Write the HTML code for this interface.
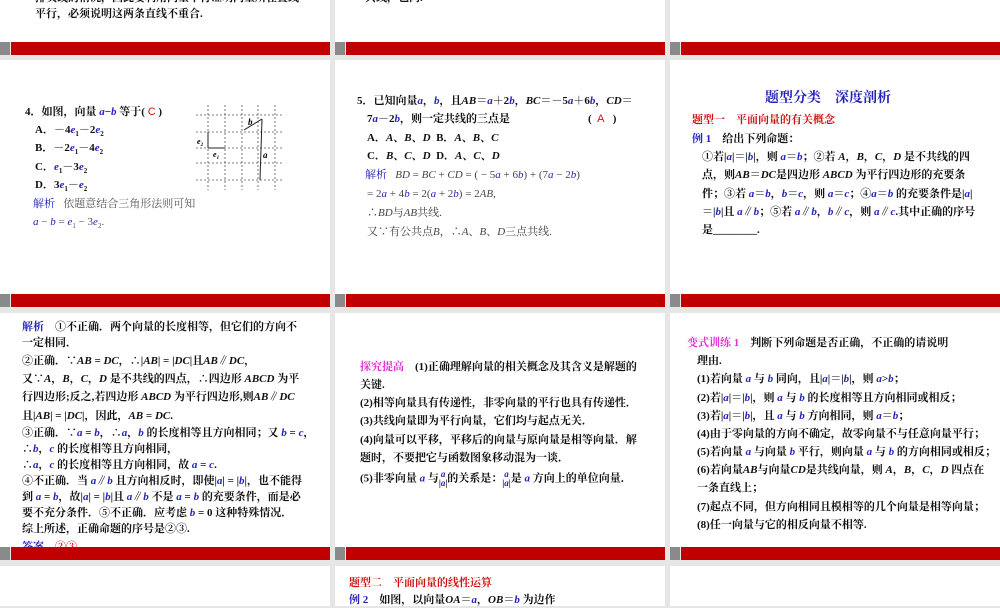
<!DOCTYPE html>
<html><head><meta charset="utf-8"><style>
body{margin:0;width:1000px;height:600px;background:#e6e6e6;position:relative;overflow:hidden;font-family:"Liberation Serif","Noto Serif CJK SC",serif;font-size:11px;color:#111;font-weight:bold}
.s{position:absolute;background:#fff}
.bar{position:absolute;height:13px;background:#c00000}
.sq{position:absolute;height:13px;width:10px;background:#8a8a8a}
.t{position:absolute;white-space:nowrap;line-height:16px}
.n{font-weight:normal}
.b{color:#2424b8;font-style:italic}
.r{color:#d01010}
.m{color:#e030d0}
.bl{color:#2424b8}
</style></head><body>
<div class="s" style="left:0;top:0;width:330px;height:42px"></div>
<div class="s" style="left:335px;top:0;width:330px;height:42px"></div>
<div class="s" style="left:670px;top:0;width:330px;height:42px"></div>
<div class="s" style="left:0;top:60px;width:330px;height:234px"></div>
<div class="s" style="left:335px;top:60px;width:330px;height:234px"></div>
<div class="s" style="left:670px;top:60px;width:330px;height:234px"></div>
<div class="s" style="left:0;top:313px;width:330px;height:235px"></div>
<div class="s" style="left:335px;top:313px;width:330px;height:235px"></div>
<div class="s" style="left:670px;top:313px;width:330px;height:235px"></div>
<div class="s" style="left:0;top:566px;width:330px;height:40px"></div>
<div class="s" style="left:335px;top:566px;width:330px;height:40px"></div>
<div class="s" style="left:670px;top:566px;width:330px;height:40px"></div>
<div class="sq" style="left:0;top:42px"></div><div class="bar" style="left:11px;top:42px;width:319px"></div>
<div class="sq" style="left:335px;top:42px"></div><div class="bar" style="left:346px;top:42px;width:319px"></div>
<div class="sq" style="left:670px;top:42px"></div><div class="bar" style="left:681px;top:42px;width:319px"></div>
<div class="sq" style="left:0;top:294px"></div><div class="bar" style="left:11px;top:294px;width:319px"></div>
<div class="sq" style="left:335px;top:294px"></div><div class="bar" style="left:346px;top:294px;width:319px"></div>
<div class="sq" style="left:670px;top:294px"></div><div class="bar" style="left:681px;top:294px;width:319px"></div>

<!-- row1 -->
<div class="t" style="left:35px;top:-10px">排负或的情况，因此要利用向量平行证明向量所在直线</div>
<div class="t" style="left:35px;top:6px">平行，必须说明这两条直线不重合.</div>
<div class="t" style="left:365px;top:-10px">共线，也同.</div>

<!-- row2 col1 -->
<div class="t" style="left:25px;top:104px"><b>4</b>．如图，向量 <span class="b">a</span>−<span class="b">b</span> 等于( <span class="r n" style="font-family:'Liberation Sans'">C</span> )</div>
<div class="t" style="left:35px;top:122px">A．－4<span class="b">e</span><sub style="font-size:7px">1</sub>－2<span class="b">e</span><sub style="font-size:7px">2</sub></div>
<div class="t" style="left:35px;top:140px">B．－2<span class="b">e</span><sub style="font-size:7px">1</sub>－4<span class="b">e</span><sub style="font-size:7px">2</sub></div>
<div class="t" style="left:35px;top:159px">C．<span class="b">e</span><sub style="font-size:7px">1</sub>－3<span class="b">e</span><sub style="font-size:7px">2</sub></div>
<div class="t" style="left:35px;top:177px">D．3<span class="b">e</span><sub style="font-size:7px">1</sub>－<span class="b">e</span><sub style="font-size:7px">2</sub></div>
<div class="t n" style="left:33px;top:196px;color:#555"><span class="bl">解析</span>&nbsp;&nbsp; 依题意结合三角形法则可知</div>
<div class="t n" style="left:33px;top:214px;color:#555"><span class="b">a</span> − <span class="b">b</span> = <span class="b">e</span><sub style="font-size:7px">1</sub> − 3<span class="b">e</span><sub style="font-size:7px">2</sub>.</div>
<svg style="position:absolute;left:0;top:0" width="330" height="300">
<g stroke="#555" stroke-width="0.8" stroke-dasharray="2,2" fill="none">
<line x1="196" y1="115" x2="282" y2="115"/><line x1="196" y1="132" x2="282" y2="132"/><line x1="196" y1="148" x2="282" y2="148"/><line x1="196" y1="163" x2="282" y2="163"/><line x1="196" y1="180" x2="282" y2="180"/>
<line x1="208" y1="105" x2="208" y2="190"/><line x1="225" y1="105" x2="225" y2="190"/><line x1="242" y1="105" x2="242" y2="190"/><line x1="258" y1="105" x2="258" y2="190"/><line x1="275" y1="105" x2="275" y2="190"/>
</g>
<g stroke="#222" stroke-width="1" fill="none">
<line x1="208" y1="148" x2="208" y2="132"/><line x1="208" y1="148" x2="225" y2="148"/>
<line x1="262" y1="119" x2="244" y2="130"/><line x1="262" y1="119" x2="260" y2="180"/>
</g>
<text x="197" y="144" font-size="8" font-style="italic" font-family="Liberation Serif">e<tspan font-size="5" dy="2">2</tspan></text>
<text x="213" y="157" font-size="8" font-style="italic" font-family="Liberation Serif">e<tspan font-size="5" dy="2">1</tspan></text>
<text x="248" y="125" font-size="9" font-style="italic" font-family="Liberation Serif">b</text>
<text x="263" y="158" font-size="9" font-style="italic" font-family="Liberation Serif">a</text>
</svg>

<!-- row2 col2 -->
<div class="t" style="left:357px;top:93px">5．已知向量<span class="b">a</span>，<span class="b">b</span>，且<i>AB</i>＝<span class="b">a</span>＋2<span class="b">b</span>，<i>BC</i>＝－5<span class="b">a</span>＋6<span class="b">b</span>，<i>CD</i>＝</div>
<div class="t" style="left:367px;top:111px">7<span class="b">a</span>－2<span class="b">b</span>，则一定共线的三点是</div>
<div class="t" style="left:588px;top:111px">( &nbsp;<span class="r n" style="font-family:'Liberation Sans'">A</span> &nbsp;&nbsp;)</div>
<div class="t" style="left:367px;top:130px">A．<i>A</i>、<i>B</i>、<i>D</i> &nbsp;B．<i>A</i>、<i>B</i>、<i>C</i></div>
<div class="t" style="left:367px;top:148px">C．<i>B</i>、<i>C</i>、<i>D</i> &nbsp;D．<i>A</i>、<i>C</i>、<i>D</i></div>
<div class="t n" style="left:365px;top:167px;color:#444"><span class="bl">解析</span>&nbsp;&nbsp; <i>BD</i> = <i>BC</i> + <i>CD</i> = ( − 5<span class="b">a</span> + 6<span class="b">b</span>) + (7<span class="b">a</span> − 2<span class="b">b</span>)</div>
<div class="t n" style="left:367px;top:186px;color:#444">= 2<span class="b">a</span> + 4<span class="b">b</span> = 2(<span class="b">a</span> + 2<span class="b">b</span>) = 2<i>AB</i>,</div>
<div class="t n" style="left:367px;top:205px;color:#444">∴<i>BD</i>与<i>AB</i>共线.</div>
<div class="t n" style="left:367px;top:224px;color:#444">又∵有公共点<i>B</i>，∴<i>A</i>、<i>B</i>、<i>D</i>三点共线.</div>

<!-- row2 col3 -->
<div class="t" style="left:765px;top:91px;font-size:14px;color:#2424b8">题型分类　深度剖析</div>
<div class="t" style="left:692px;top:112px;color:#d01010">题型一　平面向量的有关概念</div>
<div class="t" style="left:692px;top:131px"><span class="bl">例 1</span>　给出下列命题：</div>
<div class="t" style="left:702px;top:149px">①若|<span class="b">a</span>|＝|<span class="b">b</span>|，则 <span class="b">a</span>＝<span class="b">b</span>；②若 <i>A</i>，<i>B</i>，<i>C</i>，<i>D</i> 是不共线的四</div>
<div class="t" style="left:702px;top:167px">点，则<i>AB</i>＝<i>DC</i>是四边形 <i>ABCD</i> 为平行四边形的充要条</div>
<div class="t" style="left:702px;top:186px">件；③若 <span class="b">a</span>＝<span class="b">b</span>，<span class="b">b</span>＝<span class="b">c</span>，则 <span class="b">a</span>＝<span class="b">c</span>；④<span class="b">a</span>＝<span class="b">b</span> 的充要条件是|<span class="b">a</span>|</div>
<div class="t" style="left:702px;top:204px">＝|<span class="b">b</span>|且 <span class="b">a</span>∥<span class="b">b</span>；⑤若 <span class="b">a</span>∥<span class="b">b</span>，<span class="b">b</span>∥<span class="b">c</span>，则 <span class="b">a</span>∥<span class="b">c</span>.其中正确的序号</div>
<div class="t" style="left:702px;top:222px">是________.</div>

<!-- row3 col1 -->
<div class="t" style="left:22px;top:319px"><span class="bl">解析</span>　①不正确．两个向量的长度相等，但它们的方向不</div>
<div class="t" style="left:22px;top:335px">一定相同．</div>
<div class="t" style="left:22px;top:353px">②正确．∵<i>AB</i> = <i>DC</i>，∴|<i>AB</i>| = |<i>DC</i>|且<i>AB</i>∥<i>DC</i>，</div>
<div class="t" style="left:22px;top:371px">又∵<i>A</i>，<i>B</i>，<i>C</i>，<i>D</i> 是不共线的四点，∴四边形 <i>ABCD</i> 为平</div>
<div class="t" style="left:22px;top:389px">行四边形;反之,若四边形 <i>ABCD</i> 为平行四边形,则<i>AB</i>∥<i>DC</i></div>
<div class="t" style="left:22px;top:408px">且|<i>AB</i>| = |<i>DC</i>|，因此，<i>AB</i> = <i>DC</i>.</div>
<div class="t" style="left:22px;top:425px">③正确．∵<span class="b">a</span> = <span class="b">b</span>，∴<span class="b">a</span>，<span class="b">b</span> 的长度相等且方向相同；又 <span class="b">b</span> = <span class="b">c</span>，</div>
<div class="t" style="left:22px;top:441px">∴<span class="b">b</span>，<span class="b">c</span> 的长度相等且方向相同，</div>
<div class="t" style="left:22px;top:457px">∴<span class="b">a</span>，<span class="b">c</span> 的长度相等且方向相同，故 <span class="b">a</span> = <span class="b">c</span>.</div>
<div class="t" style="left:22px;top:473px">④不正确．当 <span class="b">a</span>∥<span class="b">b</span> 且方向相反时，即使|<span class="b">a</span>| = |<span class="b">b</span>|，也不能得</div>
<div class="t" style="left:22px;top:489px">到 <span class="b">a</span> = <span class="b">b</span>，故|<span class="b">a</span>| = |<span class="b">b</span>|且 <span class="b">a</span>∥<span class="b">b</span> 不是 <span class="b">a</span> = <span class="b">b</span> 的充要条件，而是必</div>
<div class="t" style="left:22px;top:505px">要不充分条件．⑤不正确．应考虑 <span class="b">b</span> = 0 这种特殊情况．</div>
<div class="t" style="left:22px;top:521px">综上所述，正确命题的序号是②③.</div>
<div class="t" style="left:22px;top:539px"><span class="bl">答案</span>　<span class="r">②③</span></div>

<!-- row3 col2 -->
<div class="t" style="left:360px;top:359px"><span class="m">探究提高</span>　(1)正确理解向量的相关概念及其含义是解题的</div>
<div class="t" style="left:360px;top:377px">关键.</div>
<div class="t" style="left:360px;top:395px">(2)相等向量具有传递性，非零向量的平行也具有传递性．</div>
<div class="t" style="left:360px;top:413px">(3)共线向量即为平行向量，它们均与起点无关．</div>
<div class="t" style="left:360px;top:432px">(4)向量可以平移，平移后的向量与原向量是相等向量．解</div>
<div class="t" style="left:360px;top:450px">题时，不要把它与函数图象移动混为一谈．</div>
<div class="t" style="left:360px;top:470px">(5)非零向量 <span class="b">a</span> 与<span style="display:inline-block;vertical-align:middle;text-align:center;font-size:9px;line-height:9px"><span class="b">a</span><br>|<span class="b">a</span>|</span>的关系是：<span style="display:inline-block;vertical-align:middle;text-align:center;font-size:9px;line-height:9px"><span class="b">a</span><br>|<span class="b">a</span>|</span>是 <span class="b">a</span> 方向上的单位向量．</div>

<!-- row3 col3 -->
<div class="t" style="left:687px;top:335px"><span class="m">变式训练 1</span>　判断下列命题是否正确，不正确的请说明</div>
<div class="t" style="left:697px;top:353px">理由.</div>
<div class="t" style="left:697px;top:371px">(1)若向量 <span class="b">a</span> 与 <span class="b">b</span> 同向，且|<span class="b">a</span>|＝|<span class="b">b</span>|，则 <span class="b">a</span>&gt;<span class="b">b</span>；</div>
<div class="t" style="left:697px;top:390px">(2)若|<span class="b">a</span>|＝|<span class="b">b</span>|，则 <span class="b">a</span> 与 <span class="b">b</span> 的长度相等且方向相同或相反；</div>
<div class="t" style="left:697px;top:408px">(3)若|<span class="b">a</span>|＝|<span class="b">b</span>|，且 <span class="b">a</span> 与 <span class="b">b</span> 方向相同，则 <span class="b">a</span>＝<span class="b">b</span>；</div>
<div class="t" style="left:697px;top:426px">(4)由于零向量的方向不确定，故零向量不与任意向量平行；</div>
<div class="t" style="left:697px;top:444px">(5)若向量 <span class="b">a</span> 与向量 <span class="b">b</span> 平行，则向量 <span class="b">a</span> 与 <span class="b">b</span> 的方向相同或相反；</div>
<div class="t" style="left:697px;top:462px">(6)若向量<i>AB</i>与向量<i>CD</i>是共线向量，则 <i>A</i>，<i>B</i>，<i>C</i>，<i>D</i> 四点在</div>
<div class="t" style="left:697px;top:480px">一条直线上；</div>
<div class="t" style="left:697px;top:499px">(7)起点不同，但方向相同且模相等的几个向量是相等向量；</div>
<div class="t" style="left:697px;top:517px">(8)任一向量与它的相反向量不相等.</div>

<div class="sq" style="left:0;top:547px"></div><div class="bar" style="left:11px;top:547px;width:319px"></div>
<div class="sq" style="left:335px;top:547px"></div><div class="bar" style="left:346px;top:547px;width:319px"></div>
<div class="sq" style="left:670px;top:547px"></div><div class="bar" style="left:681px;top:547px;width:319px"></div>

<!-- row4 -->
<div class="t" style="left:349px;top:575px;color:#d01010">题型二　平面向量的线性运算</div>
<div class="t" style="left:349px;top:592px"><span class="bl">例 2</span>　如图，以向量<i>OA</i>＝<span class="b">a</span>，<i>OB</i>＝<span class="b">b</span> 为边作</div>
</body></html>
